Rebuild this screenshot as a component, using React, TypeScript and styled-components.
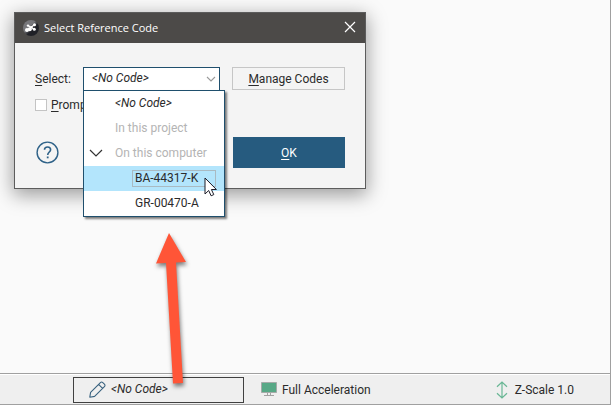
import React from "react";
import styled, { createGlobalStyle, css } from "styled-components";

const GlobalStyle = createGlobalStyle`
  *, *::before, *::after { box-sizing: border-box; }
  body {
    margin: 0;
    background: #fafafa;
    color: #2b2b2b;
    font: 12px/16px Roboto, "Liberation Sans", sans-serif;
  }
  button, select, input { font: inherit; color: inherit; margin: 0; }
`;

const Page = styled.div`
  position: relative;
  display: flex;
  flex-direction: column;
  min-height: 100vh;
  border-right: 1px solid #a0a0a0;
`;

const Workspace = styled.main`
  flex: 1;
  padding: 12px 14px;
`;

const Dialog = styled.section`
  width: 352px;
  max-width: 100%;
  background: #f4f4f4;
  border: 1px solid #5c5c5c;
  box-shadow: 0 5px 18px 1px rgba(0, 0, 0, 0.38);
`;

const TitleBar = styled.header`
  display: flex;
  align-items: center;
  gap: 5px;
  height: 30px;
  padding: 0 9px 0 8px;
  background: #4c4a48;
  color: #fff;
`;

const Title = styled.h1`
  flex: 1;
  margin: 0;
  font: 400 11px/16px "Open Sans", "Noto Sans", sans-serif;
`;

const CloseButton = styled.button`
  display: flex;
  padding: 0 0 2px;
  border: 0;
  background: none;
`;

const Form = styled.form`
  display: flex;
  flex-direction: column;
  padding: 24px 20px 20px;
`;

const FieldRow = styled.div`
  display: grid;
  grid-template-columns: 48px 137px 1fr;
  align-items: center;
`;

const ComboBox = styled.div`
  position: relative;
`;

const CodeSelect = styled.select`
  display: block;
  width: 100%;
  height: 24px;
  padding: 0 8px 2px;
  border: 1px solid #1f4f6d;
  border-radius: 0;
  background: #fff;
  appearance: none;
  font-style: italic;
  outline: none;
`;

const SelectChevron = styled.svg`
  position: absolute;
  right: 4px;
  top: 9px;
  pointer-events: none;
`;

const Menu = styled.ul`
  position: absolute;
  z-index: 1;
  top: 23px;
  left: 0;
  width: 142px;
  margin: 0;
  padding: 0;
  list-style: none;
  background: #fff;
  border: 1px solid #1f4f6d;
  box-shadow: 2px 2px 2px rgba(0, 0, 0, 0.5);
`;

type ItemProps = {
  $level?: number;
  $muted?: boolean;
  $italic?: boolean;
  $active?: boolean;
};

const MenuItem = styled.li<ItemProps>`
  position: relative;
  display: flex;
  align-items: center;
  height: 25px;
  padding-left: ${({ $level }) => ($level === 2 ? 48 : 28)}px;
  white-space: nowrap;
  ${({ $muted }) => $muted && css`color: #b4b4b4;`}
  ${({ $italic }) => $italic && css`font-style: italic;`}
  ${({ $active }) => $active && css`background: #b3e5fc;`}
`;

const ItemLabel = styled.span<{ $focused?: boolean }>`
  padding: 0 2px 1px;
  border: 1px solid transparent;
  line-height: 14px;
  ${({ $focused }) => $focused && css`
    width: 84px;
    border-color: #a9bac2;
  `}
`;

const Expander = styled.svg`
  position: absolute;
  left: 5px;
  top: 7px;
`;

const Pointer = styled.svg`
  position: absolute;
  left: 120px;
  top: 11px;
`;

const SecondaryButton = styled.button`
  width: 113px;
  height: 23px;
  padding: 0;
  justify-self: end;
  align-self: start;
  border: 1px solid #c6c6c6;
  background: #f4f4f4;
`;

const CheckRow = styled.label`
  display: flex;
  align-items: center;
  gap: 4px;
  margin-top: 6px;
`;

const CheckBox = styled.input`
  width: 12px;
  height: 12px;
  appearance: none;
  background: #fff;
  border: 1px solid #c4c4c4;
`;

const Actions = styled.div`
  display: flex;
  align-items: center;
  justify-content: space-between;
  margin-top: 24px;
`;

const HelpButton = styled.button`
  display: flex;
  padding: 0;
  margin-left: 1px;
  border: 0;
  background: none;
`;

const PrimaryButton = styled.button`
  width: 112px;
  height: 31px;
  padding: 0;
  border: 0;
  background: #265b7f;
  color: #fff;
`;

const Key = styled.span`
  text-decoration: underline;
  text-decoration-thickness: 1px;
  text-underline-offset: 2px;
`;

const StatusBar = styled.footer`
  display: grid;
  grid-template-columns: 171px 1fr auto;
  align-items: center;
  height: 32px;
  padding: 1px 36px 0 73px;
  background: #efefef;
  border-top: 1px solid #a0a0a0;
  border-bottom: 1px solid #a0a0a0;
  box-shadow: inset 0 1px #fff;
`;

const CodeButton = styled.button`
  display: flex;
  align-items: center;
  gap: 5px;
  height: 26px;
  padding: 0 15px;
  border: 1px solid #404040;
  background: none;
  font-style: italic;
  line-height: 14px;
`;

const CodeText = styled.span`
  padding-bottom: 2px;
`;

const Status = styled.div<{ $indent?: boolean }>`
  display: flex;
  align-items: center;
  gap: ${({ $indent }) => ($indent ? 5 : 7)}px;
  padding-left: ${({ $indent }) => ($indent ? 17 : 0)}px;
`;

const CalloutArrow = styled.svg`
  position: absolute;
  left: 150px;
  bottom: 12px;
  z-index: 2;
  overflow: visible;
  pointer-events: none;
  filter: drop-shadow(1px 3px 2px rgba(0, 0, 0, 0.5));
`;

const AppIcon = () => (
  <svg width="16" height="16" viewBox="0 0 16 16" aria-hidden="true">
    <defs>
      <linearGradient id="ball" x1="0" y1="0" x2="1" y2="1">
        <stop offset="0.4" stopColor="#77777b" />
        <stop offset="0.6" stopColor="#202127" />
      </linearGradient>
    </defs>
    <circle cx="8" cy="8" r="8" fill="url(#ball)" />
    <path d="M4 10 8 7.5 11.5 4.5M5 5.5 8 7.5 11 9" fill="none" stroke="#fff" strokeWidth="1.1" />
    <g fill="#fff">
      <circle cx="4" cy="10" r="2" />
      <circle cx="6.8" cy="9.2" r="2" />
      <circle cx="5" cy="5.6" r="1.2" />
      <circle cx="8.3" cy="7.3" r="1.3" />
      <circle cx="11.5" cy="4.7" r="1.5" />
      <circle cx="11.3" cy="9.2" r="1.5" />
    </g>
  </svg>
);

const CloseIcon = () => (
  <svg width="12" height="12" viewBox="0 0 12 12" aria-hidden="true">
    <path d="m1 1 10 10M11 1 1 11" stroke="#fff" strokeWidth="1.2" />
  </svg>
);

const HelpIcon = () => (
  <svg width="23" height="23" viewBox="0 0 23 23" fill="none" stroke="#2f6288" aria-hidden="true">
    <circle cx="11.5" cy="11.5" r="10.4" strokeWidth="1.4" />
    <path d="M8.5 8.8C8.5 7 9.7 6 11.6 6s3 1 3 2.7c0 2.2-2.9 2.5-2.9 5.3" strokeWidth="1.6" />
    <path d="M11.7 15.5v1.8" strokeWidth="1.8" />
  </svg>
);

const PencilIcon = () => (
  <svg width="17" height="17" viewBox="0 0 17 17" fill="none" stroke="#39627f" strokeWidth="1.1" strokeLinejoin="round" aria-hidden="true">
    <path d="M.8 16.2 1.6 11.4 11.4 1.6Q12.6.4 13.8 1.6L15.4 3.2Q16.6 4.4 15.4 5.6L5.6 15.4ZM9.6 3.4 13.6 7.4" />
  </svg>
);

const MonitorIcon = () => (
  <svg width="16" height="15" viewBox="0 0 16 15" aria-hidden="true">
    <path d="M.5.5h15v10H.5z" fill="#57a886" stroke="#a5aaa8" />
    <path d="M6.5 11v2.5M9.5 11v2.5M3 13.5h10" stroke="#a2a2a2" />
  </svg>
);

const ScaleIcon = () => (
  <svg width="12" height="18" viewBox="0 0 12 18" fill="none" stroke="#69b795" strokeWidth="1.2" aria-hidden="true">
    <path d="M6 1v16M1 5.8 6 1l5 4.8M1 12.2 6 17l5-4.8" />
  </svg>
);

export default function App() {
  return (
    <>
      <GlobalStyle />
      <Page>
        <Workspace>
          <Dialog role="dialog" aria-labelledby="dialog-title">
            <TitleBar>
              <AppIcon />
              <Title id="dialog-title">Select Reference Code</Title>
              <CloseButton type="button" aria-label="Close"><CloseIcon /></CloseButton>
            </TitleBar>
            <Form onSubmit={(e: React.FormEvent) => e.preventDefault()}>
              <FieldRow>
                <label htmlFor="code"><Key>S</Key>elect:</label>
                <ComboBox>
                  <CodeSelect id="code">
                    <option>&lt;No Code&gt;</option>
                    <option>BA-44317-K</option>
                    <option>GR-00470-A</option>
                  </CodeSelect>
                  <SelectChevron width="10" height="7" viewBox="0 0 10 7" aria-hidden="true">
                    <path d="m1 1 4 4 4-4" fill="none" stroke="#9a9a9a" strokeWidth="1.1" />
                  </SelectChevron>
                  <Menu role="listbox" aria-label="Reference codes">
                    <MenuItem role="option" $italic><ItemLabel>&lt;No Code&gt;</ItemLabel></MenuItem>
                    <MenuItem role="presentation" $muted><ItemLabel>In this project</ItemLabel></MenuItem>
                    <MenuItem role="presentation" $muted>
                      <Expander width="14" height="10" viewBox="0 0 14 10" aria-hidden="true">
                        <path d="m1 2 6 6 6-6" fill="none" stroke="#333" strokeWidth="1.2" />
                      </Expander>
                      <ItemLabel>On this computer</ItemLabel>
                    </MenuItem>
                    <MenuItem role="option" aria-selected="true" $level={2} $active>
                      <ItemLabel $focused>BA-44317-K</ItemLabel>
                      <Pointer width="14" height="20" viewBox="0 0 14 20" aria-hidden="true">
                        <path d="M1 1v16l3.7-3.5 2.4 5.3 2.7-1.2-2.4-5.1h5z" fill="#fff" stroke="#1c1c28" />
                      </Pointer>
                    </MenuItem>
                    <MenuItem role="option" $level={2}><ItemLabel>GR-00470-A</ItemLabel></MenuItem>
                  </Menu>
                </ComboBox>
                <SecondaryButton type="button"><Key>M</Key>anage Codes</SecondaryButton>
              </FieldRow>
              <CheckRow>
                <CheckBox type="checkbox" />
                <span><Key>P</Key>rompt</span>
              </CheckRow>
              <Actions>
                <HelpButton type="button" aria-label="Help"><HelpIcon /></HelpButton>
                <PrimaryButton type="submit"><Key>O</Key>K</PrimaryButton>
              </Actions>
            </Form>
          </Dialog>
        </Workspace>
        <StatusBar>
          <CodeButton type="button"><PencilIcon /><CodeText>&lt;No Code&gt;</CodeText></CodeButton>
          <Status $indent><MonitorIcon />Full Acceleration</Status>
          <Status><ScaleIcon />Z-Scale 1.0</Status>
        </StatusBar>
        <CalloutArrow width="40" height="160" viewBox="150 233 40 160" aria-hidden="true">
          <path d="m169 233 17 29-10 .5 7 120.5-10 .5-7-120.5-10 .5z" fill="#ff5537" />
        </CalloutArrow>
      </Page>
    </>
  );
}
